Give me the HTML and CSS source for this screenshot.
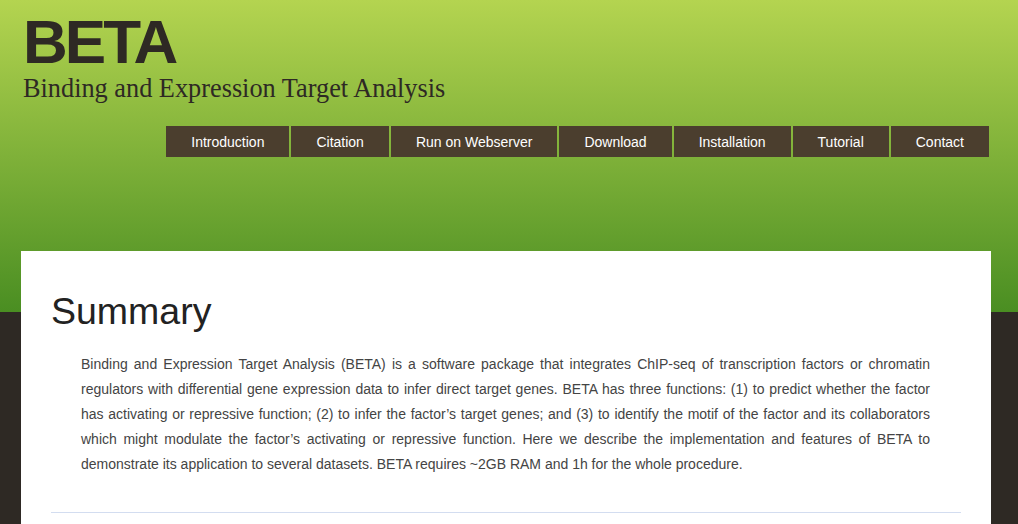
FILE: index.html
```html
<!DOCTYPE html>
<html lang="en">
<head>
<meta charset="utf-8">
<title>BETA</title>
<link rel="stylesheet" href="styles.css">
</head>
<body>
<header class="site-header">
  <h1 class="logo">BETA</h1>
  <p class="tagline">Binding and Expression Target Analysis</p>
  <nav class="menu">
    <a href="#">Introduction</a>
    <a href="#">Citation</a>
    <a href="#">Run on Webserver</a>
    <a href="#">Download</a>
    <a href="#">Installation</a>
    <a href="#">Tutorial</a>
    <a href="#">Contact</a>
  </nav>
</header>
<main class="content">
  <h2 class="section-title">Summary</h2>
  <p class="summary">Binding and Expression Target Analysis (BETA) is a software package that integrates ChIP-seq of transcription factors or chromatin regulators with differential gene expression data to infer direct target genes. BETA has three functions: (1) to predict whether the factor has activating or repressive function; (2) to infer the factor’s target genes; and (3) to identify the motif of the factor and its collaborators which might modulate the factor’s activating or repressive function. Here we describe the implementation and features of BETA to demonstrate its application to several datasets. BETA requires ~2GB RAM and 1h for the whole procedure.</p>
  <hr class="divider">
</main>
</body>
</html>
```
FILE: styles.css
```css
html, body {
  margin: 0;
  padding: 0;
}
body {
  background: linear-gradient(#b4d450, #4a8e22) top left / 100% 312px no-repeat, #2e2924;
  font-family: "Liberation Sans", Arial, sans-serif;
  min-height: 524px;
}
.site-header {
  height: 251px;
  box-sizing: border-box;
  padding: 11px 29px 0 23px;
  display: flex;
  flex-direction: column;
}
.logo {
  margin: 0;
  font-size: 62px;
  line-height: 62px;
  font-weight: bold;
  letter-spacing: -3px;
  color: #2e2924;
}
.tagline {
  margin: 1px 0 0 0;
  font-family: "Liberation Serif", "Times New Roman", serif;
  font-size: 26.3px;
  line-height: 30px;
  color: #2e2924;
}
.menu {
  display: flex;
  justify-content: flex-end;
  gap: 2px;
  margin-top: 22px;
}
.menu a {
  display: block;
  background: #4b3e2e;
  color: #fff;
  text-decoration: none;
  font-size: 14px;
  line-height: 29px;
  height: 29px;
  padding: 2px 25px 0 25px;
}
.content {
  background: #fff;
  margin: 0 27px 0 21px;
  padding: 39px 30px 20px 30px;
}
.section-title {
  margin: 0;
  font-size: 37.5px;
  font-weight: normal;
  line-height: 42px;
  color: #222;
}
.summary {
  margin: 20px 31px 0 30px;
  font-size: 14px;
  line-height: 25px;
  color: #444;
  text-align: justify;
}
.divider {
  margin: 35px 0 0 0;
  border: 0;
  border-top: 1px solid #d3ddf0;
}
```
